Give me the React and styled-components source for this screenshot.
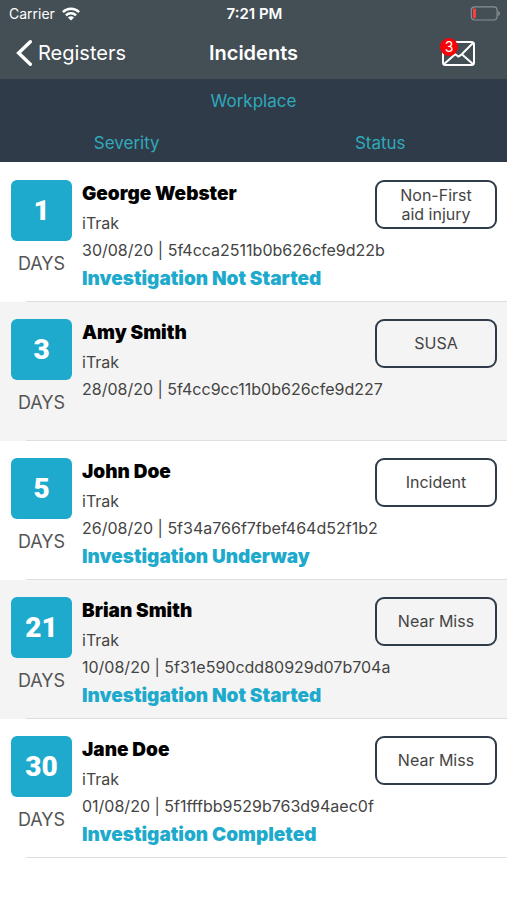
// third-party
import React from "react";
import styled, { createGlobalStyle, ThemeProvider } from "styled-components";

const theme = {
  slate: "#434e55",
  navy: "#2f3b49",
  blue: "#1eaacc",
  teal: "#30a9bb",
  red: "#fb0007",
  grey: "#f4f4f4",
  line: "#dedfe0",
  text: "#444444",
};

const incidents = [
  {
    id: "5f4cca2511b0b626cfe9d22b",
    days: 1,
    name: "George Webster",
    company: "iTrak",
    date: "30/08/20",
    status: "Investigation Not Started",
    type: "Non-First aid injury",
  },
  {
    id: "5f4cc9cc11b0b626cfe9d227",
    days: 3,
    name: "Amy Smith",
    company: "iTrak",
    date: "28/08/20",
    status: "",
    type: "SUSA",
  },
  {
    id: "5f34a766f7fbef464d52f1b2",
    days: 5,
    name: "John Doe",
    company: "iTrak",
    date: "26/08/20",
    status: "Investigation Underway",
    type: "Incident",
  },
  {
    id: "5f31e590cdd80929d07b704a",
    days: 21,
    name: "Brian Smith",
    company: "iTrak",
    date: "10/08/20",
    status: "Investigation Not Started",
    type: "Near Miss",
  },
  {
    id: "5f1fffbb9529b763d94aec0f",
    days: 30,
    name: "Jane Doe",
    company: "iTrak",
    date: "01/08/20",
    status: "Investigation Completed",
    type: "Near Miss",
  },
];

// ===== START OF STYLING =====
const GlobalStyle = createGlobalStyle`
  *,
  *::before,
  *::after {
    box-sizing: border-box;
  }

  body {
    margin: 0;
    background-color: #fff;
    font-family: Inter, "Liberation Sans", sans-serif;
  }

  button {
    padding: 0;
    border: none;
    background: none;
    font: inherit;
    cursor: pointer;
  }
`;

const Header = styled.header`
  background-color: ${({ theme }) => theme.slate};
  color: #fff;
`;

const StatusBar = styled.div`
  display: grid;
  grid-template-columns: 1fr auto 1fr;
  align-items: center;

  height: 27px;
  padding: 0 7px 0 9px;

  font-size: 14px;
`;

const Carrier = styled.span`
  display: flex;
  align-items: center;
  gap: 7px;
`;

const Time = styled.span`
  font-size: 15px;
  font-weight: 600;
`;

const Battery = styled.svg`
  justify-self: end;
`;

const NavBar = styled.nav`
  display: grid;
  grid-template-columns: 1fr auto 1fr;
  align-items: center;

  height: 52px;
  padding: 0 32px 0 16px;
`;

const BackLink = styled.a`
  display: flex;
  align-items: center;
  gap: 6px;

  color: #fff;
  font-size: 20px;
  text-decoration: none;
`;

const Title = styled.h1`
  margin: 0 0 0 16px;

  font-size: 20px;
  font-weight: 600;
`;

const MailButton = styled.button`
  position: relative;
  justify-self: end;

  display: flex;

  color: #fff;
`;

const MailCount = styled.span`
  position: absolute;
  top: -3px;
  left: -2px;

  width: 18px;
  height: 18px;

  border-radius: 50%;
  background-color: ${({ theme }) => theme.red};
  font-size: 14px;
  line-height: 18px;
  text-align: center;
`;

const Filters = styled.div`
  display: grid;
  grid-template-columns: 1fr 1fr;

  background-color: ${({ theme }) => theme.navy};
`;

const FilterButton = styled.button`
  grid-column: ${({ $wide }) => ($wide ? "1 / -1" : "auto")};

  height: ${({ $wide }) => ($wide ? "44px" : "39px")};

  color: ${({ theme }) => theme.teal};
  font-size: 17px;
`;

const List = styled.ul`
  margin: 0;
  padding: 1px 0 0;

  list-style: none;
`;

const Row = styled.li`
  background-color: #fff;

  &:nth-child(even) {
    background-color: ${({ theme }) => theme.grey};
  }

  &::after {
    content: "";
    display: block;

    height: 1px;
    margin-left: 26px;

    background-color: ${({ theme }) => theme.line};
  }
`;

const RowContent = styled.article`
  display: flex;
  gap: 10px;

  min-height: 138px;
  padding: 17px 10px 7px 11px;
`;

const Age = styled.div`
  display: flex;
  flex-direction: column;
  align-items: center;
  gap: 12px;

  color: #555;
  font-size: 18px;
`;

const AgeBox = styled.strong`
  display: flex;
  align-items: center;
  justify-content: center;

  width: 61px;
  height: 61px;

  border-radius: 6px;
  background-color: ${({ theme }) => theme.blue};
  color: #fff;
  font-family: Roboto, "Liberation Sans", sans-serif;
  font-size: 28px;
  font-weight: 900;
`;

const Details = styled.div`
  flex: 1;

  min-width: 0;

  color: ${({ theme }) => theme.text};
  font-size: 16px;
  line-height: 24px;
`;

const Top = styled.div`
  display: flex;
  justify-content: space-between;
  align-items: flex-start;
`;

const Name = styled.h2`
  margin: 0 0 3px;

  color: #000;
  font-size: 19px;
  font-weight: 900;
  line-height: 28px;
`;

const Text = styled.p`
  margin: 0 0 3px;
`;

const Investigation = styled.p`
  margin: 0;

  color: ${({ theme }) => theme.blue};
  font-size: 19px;
  font-weight: 900;
  line-height: 28px;
`;

const TypeButton = styled.button`
  flex: none;

  width: 122px;
  height: 49px;

  button& {
    padding: 0 20px;
    border: 2px solid ${({ theme }) => theme.navy};
    border-radius: 9px;
    color: ${({ theme }) => theme.text};
    font-size: 16px;
    line-height: 19px;
  }
`;
// ===== END OF STYLING =====

const Incident = ({ days, name, company, date, id, status, type }) => (
  <Row>
    <RowContent>
      <Age>
        <AgeBox>{days}</AgeBox>
        <span>DAYS</span>
      </Age>
      <Details>
        <Top>
          <div>
            <Name>{name}</Name>
            <Text>{company}</Text>
          </div>
          <TypeButton type="button">{type}</TypeButton>
        </Top>
        <Text>
          {date} | {id}
        </Text>
        {/* not every incident has an investigation */}
        {status && <Investigation>{status}</Investigation>}
      </Details>
    </RowContent>
  </Row>
);

const App = () => (
  <ThemeProvider theme={theme}>
    <GlobalStyle />
    <Header>
      <StatusBar>
        <Carrier>
          Carrier
          <svg width="18" height="14" viewBox="0 0 18 14" aria-hidden="true">
            <g fill="none" stroke="#fff" strokeWidth="2.4">
              <path d="M0.9 5.1a11.5 11.5 0 0 1 16.2 0" />
              <path d="M3.9 8.3a7.2 7.2 0 0 1 10.2 0" />
            </g>
            <path d="M9 13.6 5.9 10.5a4.4 4.4 0 0 1 6.2 0z" fill="#fff" />
          </svg>
        </Carrier>
        <Time>7:21 PM</Time>
        <Battery width="30" height="15" viewBox="0 0 30 15" aria-hidden="true">
          <rect
            x="1.3"
            y="0.8"
            width="25.8"
            height="13.2"
            rx="3.5"
            fill="none"
            stroke="#899095"
            strokeWidth="1.2"
          />
          <rect x="3" y="2.6" width="3" height="9.6" rx="1" fill="#f7403b" />
          <path d="M28.2 5v5q1.8-0.8 1.8-2.5T28.2 5z" fill="#899095" />
        </Battery>
      </StatusBar>
      <NavBar>
        <BackLink href="#registers">
          <svg width="16" height="26" viewBox="0 0 16 26" aria-hidden="true">
            <path
              d="M14.3 1.8 2.6 13l11.7 11.2"
              fill="none"
              stroke="#fff"
              strokeWidth="3.4"
              strokeLinecap="round"
            />
          </svg>
          Registers
        </BackLink>
        <Title>Incidents</Title>
        <MailButton type="button" aria-label="Messages, 3 unread">
          <svg width="33" height="25" viewBox="0 0 33 25" aria-hidden="true">
            <g
              fill="none"
              stroke="#fff"
              strokeWidth="2"
              strokeLinejoin="round"
            >
              <rect x="1" y="1" width="31" height="23" rx="2.5" />
              <path d="M1.8 1.8 13.2 13.2 16.5 15.6 19.8 13.2 31.2 1.8" />
              <path d="M1.8 23.2 13.2 13.2M31.2 23.2 19.8 13.2" />
            </g>
          </svg>
          <MailCount>3</MailCount>
        </MailButton>
      </NavBar>
    </Header>
    <main>
      <Filters>
        <FilterButton type="button" $wide>
          Workplace
        </FilterButton>
        <FilterButton type="button">Severity</FilterButton>
        <FilterButton type="button">Status</FilterButton>
      </Filters>
      <List>
        {incidents.map((incident) => (
          <Incident key={incident.id} {...incident} />
        ))}
      </List>
    </main>
  </ThemeProvider>
);

export default App;
